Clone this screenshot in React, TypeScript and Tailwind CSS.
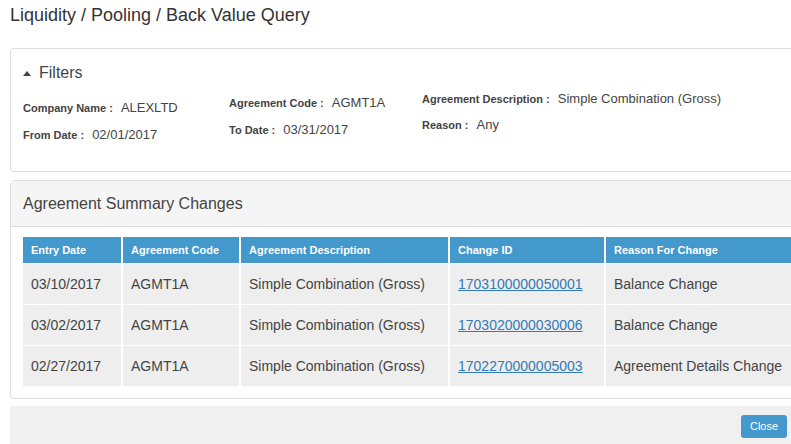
const rows = [
  ['03/10/2017', 'AGMT1A', 'Simple Combination (Gross)', '1703100000050001', 'Balance Change'],
  ['03/02/2017', 'AGMT1A', 'Simple Combination (Gross)', '1703020000030006', 'Balance Change'],
  ['02/27/2017', 'AGMT1A', 'Simple Combination (Gross)', '1702270000005003', 'Agreement Details Change'],
]

const cols = ['w-[98px]', 'w-[116px]', 'w-[207px]', 'w-[154px]', 'w-[200px]']
const heads = ['Entry Date', 'Agreement Code', 'Agreement Description', 'Change ID', 'Reason For Change']

function Field({ label, value }: { label: string; value: string }) {
  return (
    <div className="flex items-baseline leading-[16px]">
      <span className="text-[11px] font-bold text-[#444]">{label} :</span>
      <span className="ml-2 text-[13px] text-[#444]">{value}</span>
    </div>
  )
}

export default function App() {
  return (
    <div
      className="h-[444px] w-[791px] overflow-hidden bg-white text-[#333]"
      style={{ fontFamily: '"Liberation Sans", Arial, sans-serif' }}
    >
      <h1 className="h-[32px] pl-[10px] pt-[4px] text-[18px] leading-[22px] text-[#333]">
        Liquidity / Pooling / Back Value Query
      </h1>
      <div className="ml-[10px] mt-[16px] h-[124px] w-[800px] rounded border border-[#ddd]">
        <div className="flex items-center pl-[12px] pt-[14px] text-[16px] leading-[20px] text-[#444]">
          <span className="mr-[8px] inline-block h-0 w-0 border-x-[4px] border-b-[5px] border-x-transparent border-b-[#444]" />
          Filters
        </div>
        <div className="mt-[12px] flex pl-[12px]">
          <div className="flex w-[206px] flex-col gap-[11px] pt-[5px]">
            <Field label="Company Name" value="ALEXLTD" />
            <Field label="From Date" value="02/01/2017" />
          </div>
          <div className="flex w-[193px] flex-col gap-[11px]">
            <Field label="Agreement Code" value="AGMT1A" />
            <Field label="To Date" value="03/31/2017" />
          </div>
          <div className="-mt-[4px] flex flex-col gap-[10px]">
            <Field label="Agreement Description" value="Simple Combination (Gross)" />
            <Field label="Reason" value="Any" />
          </div>
        </div>
      </div>
      <div className="ml-[10px] mt-[8px] w-[800px] rounded border border-[#ddd]">
        <div className="h-[46px] border-b border-[#ddd] bg-[#f5f5f5] pl-[12px] pt-[13px] text-[16px] leading-[20px] text-[#444]">
          Agreement Summary Changes
        </div>
        <div className="px-[12px] pb-[12px] pt-[10px]">
          <div className="flex h-[26px] gap-[2px] bg-white">
            {heads.map((h, i) => (
              <div key={h} className={`${cols[i]} shrink-0 bg-[#4398cc] pl-[8px] pt-[7px] text-[11px] font-bold leading-[13px] text-white`}>
                {h}
              </div>
            ))}
          </div>
          {rows.map((r) => (
            <div key={r[3]} className="mt-[1px] flex h-[40px] gap-[2px]">
              {r.map((c, i) => (
                <div key={i} className={`${cols[i]} flex shrink-0 items-center bg-[#eee] pl-[8px] text-[14px] text-[#444]`}>
                  {i === 3 ? <a className="text-[#337ab7] underline">{c}</a> : c}
                </div>
              ))}
            </div>
          ))}
        </div>
      </div>
      <div className="ml-[10px] mt-[7px] flex h-[40px] w-[790px] justify-end bg-[#f0f0f0] pr-[13px] pt-[9px]">
        <button className="h-[23px] w-[46px] rounded-[3px] bg-[#4398cc] text-[11px] text-white">Close</button>
      </div>
    </div>
  )
}
